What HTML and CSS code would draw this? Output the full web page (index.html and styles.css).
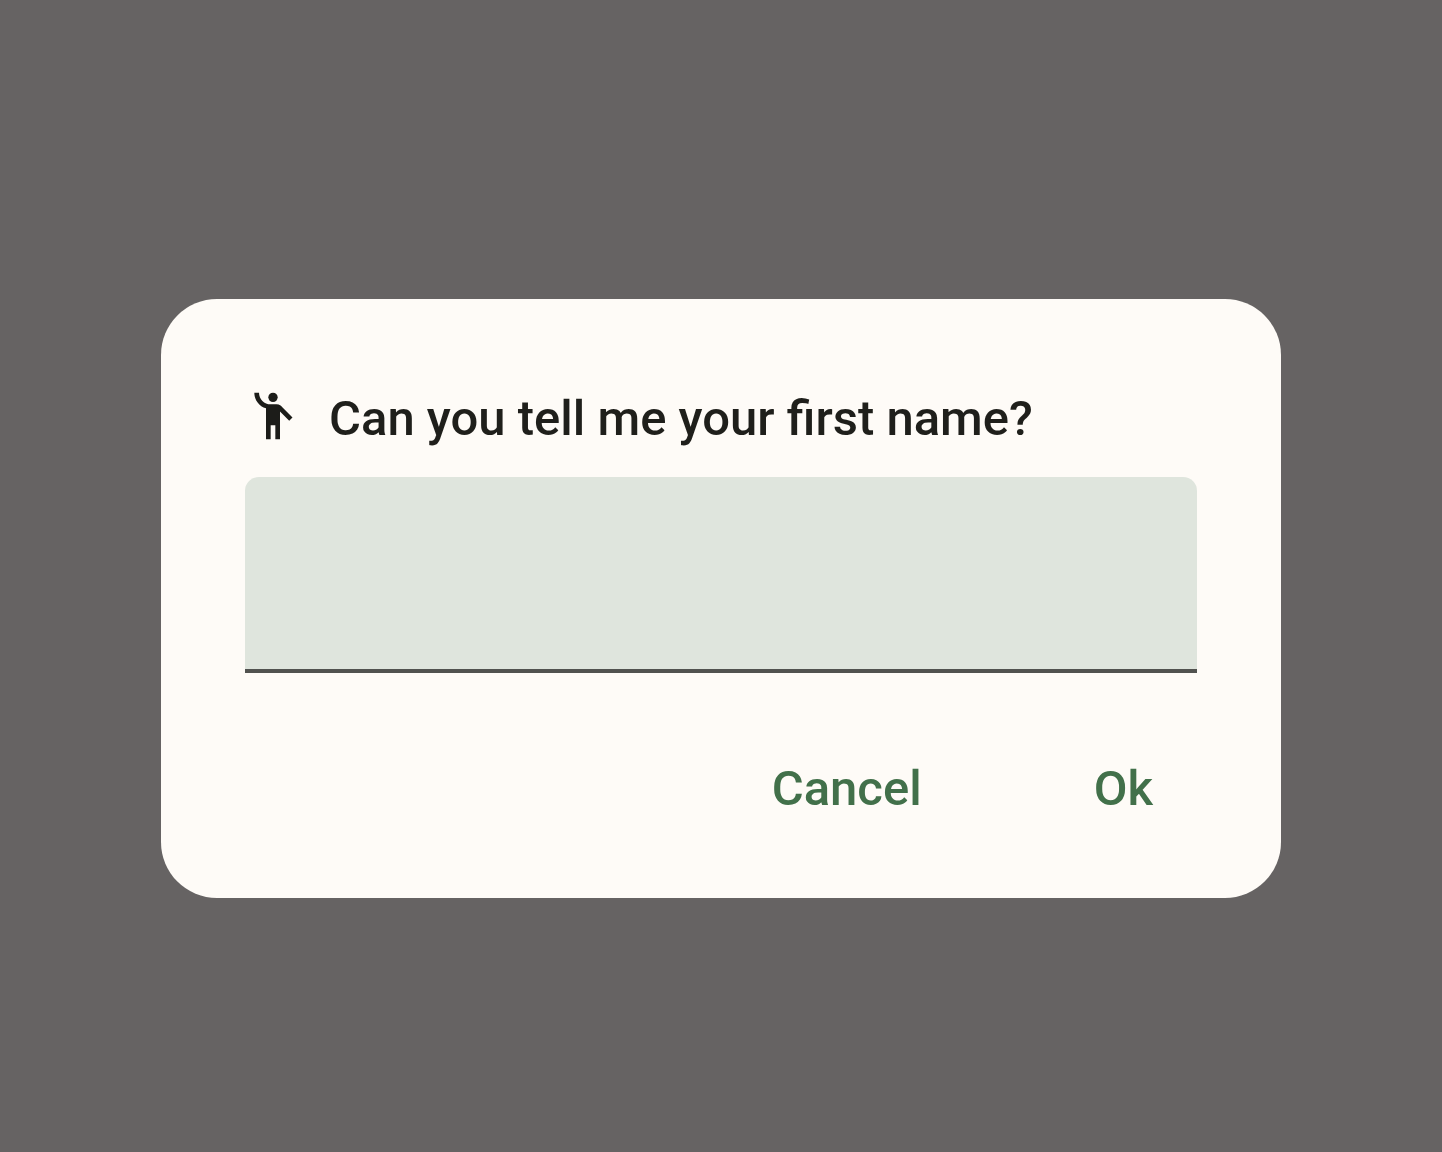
FILE: index.html
```html
<!DOCTYPE html>
<html lang="en">
<head>
  <meta charset="utf-8">
  <meta name="viewport" content="width=device-width, initial-scale=1">
  <title>First name</title>
  <link rel="stylesheet" href="styles.css">
</head>
<body>
  <main class="scrim">
    <form class="dialog" role="dialog" aria-labelledby="dialog-title">
      <div class="dialog-header">
        <svg class="dialog-icon" viewBox="0 0 24 24" aria-hidden="true">
          <circle cx="12" cy="4" r="2"/>
          <path d="M15.89 8.11C15.5 7.72 14.83 7 13.53 7h-2.54C8.24 6.99 6 4.75 6 2H4c0 3.16 2.11 5.84 5 6.71V22h2v-6h2v6h2V10.05L18.95 14l1.41-1.41-4.47-4.48z"/>
        </svg>
        <label class="dialog-title" id="dialog-title" for="first-name">Can you tell me your first name?</label>
      </div>
      <input class="text-field" id="first-name" type="text">
      <div class="dialog-actions">
        <button class="text-button" type="button">Cancel</button>
        <button class="text-button" type="submit">Ok</button>
      </div>
    </form>
  </main>
</body>
</html>
```

FILE: styles.css
```css
* {
  box-sizing: border-box;
}

body {
  margin: 0;
  font-family: Roboto, "Liberation Sans", sans-serif;
  background: #666363;
}

.scrim {
  display: flex;
  align-items: center;
  justify-content: center;
  min-height: 100vh;
  padding: 45px 24px 0;
}

.dialog {
  width: 100%;
  max-width: 1120px;
  padding: 84px 84px 40px;
  border-radius: 56px;
  background: #fefbf7;
}

.dialog-header {
  display: flex;
  align-items: center;
  gap: 28px;
  margin-bottom: 28px;
}

.dialog-icon {
  flex: none;
  width: 56px;
  height: 56px;
  fill: #1c1c19;
}

.dialog-title {
  padding-top: 6px;
  font-size: 49px;
  font-weight: 500;
  line-height: 60px;
  color: #1f1f1b;
}

.text-field {
  display: block;
  width: 100%;
  height: 196px;
  padding: 0 56px;
  border: 0;
  border-bottom: 4px solid #51524f;
  border-radius: 14px 14px 0 0;
  outline: 0;
  background: #dfe5dd;
  font: inherit;
  font-size: 49px;
  color: #1f1f1b;
}

.dialog-actions {
  display: flex;
  justify-content: flex-end;
  gap: 84px;
  margin-top: 45px;
}

.text-button {
  height: 140px;
  padding: 0 44px;
  border: 0;
  border-radius: 70px;
  background: transparent;
  font: inherit;
  font-size: 49px;
  font-weight: 500;
  color: #42704a;
  cursor: pointer;
}
```
